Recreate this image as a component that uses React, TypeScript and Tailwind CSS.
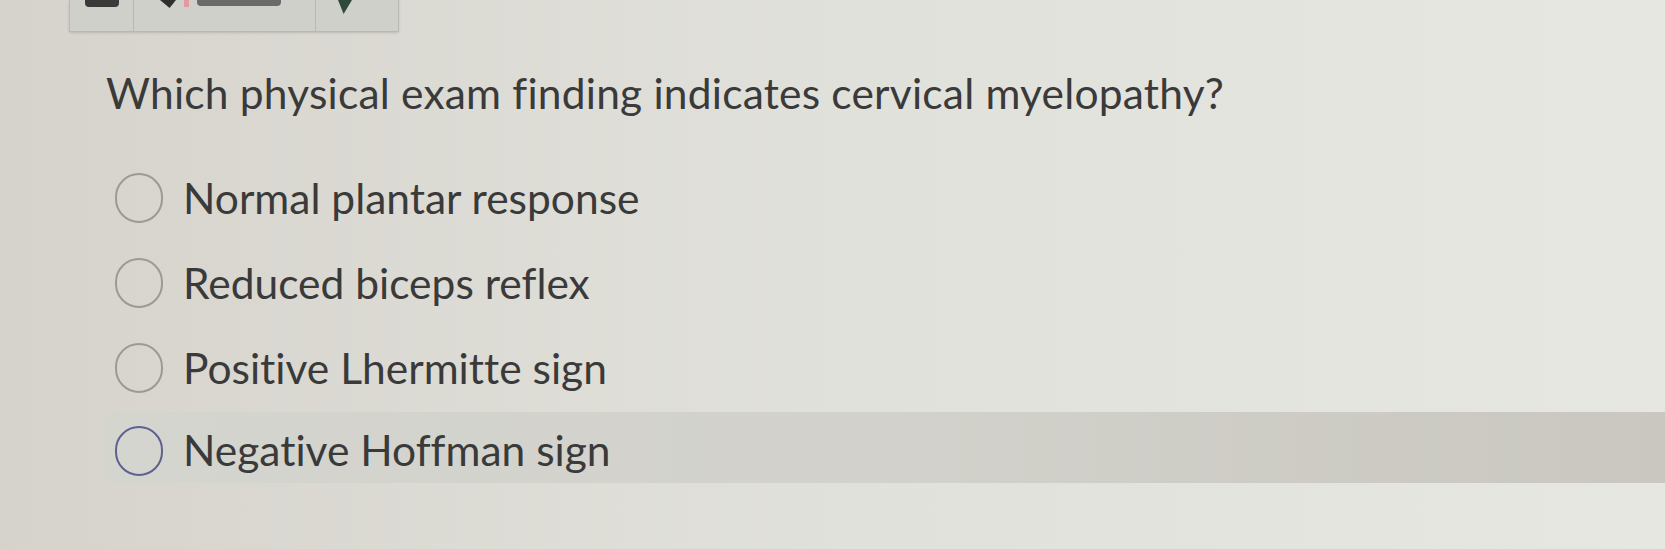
import { useState } from "react";

const options = [
  "Normal plantar response",
  "Reduced biceps reflex",
  "Positive Lhermitte sign",
  "Negative Hoffman sign",
];

export default function App() {
  const [hovered] = useState(3);
  return (
    <div
      className="w-[1665px] h-[549px] overflow-hidden bg-gradient-to-r from-[#d6d3cc] via-[#e1e1db] to-[#e7e7e2] text-[#3a3a3a] [font-variant-ligatures:none]"
      style={{ fontFamily: "Lato, 'Open Sans', sans-serif" }}
    >
      {/* toolbar cut off at top */}
      <div className="ml-[69px] flex h-[32px] w-[330px] border border-t-0 border-[#b9b9b4] bg-[#d0d0cb] shadow-sm">
        <div className="flex w-[64px] items-start justify-center border-r border-[#b9b9b4]">
          <div className="h-[7px] w-[34px] rounded-b-sm bg-[#3a3a3a]" />
        </div>
        <div className="flex w-[182px] items-start gap-2 border-r border-[#b9b9b4] pl-[26px]">
          <div className="h-[8px] w-[16px] bg-[#2f2f2f] [clip-path:polygon(0_0,100%_0,60%_100%)]" />
          <div className="h-[7px] w-[5px] bg-[#e19aa0]" />
          <div className="h-[6px] w-[84px] rounded-b-sm bg-[#6a6a6a]" />
        </div>
        <div className="flex flex-1 items-start pl-[22px]">
          <div className="h-[14px] w-[14px] bg-[#2f4a3a] [clip-path:polygon(0_0,100%_0,40%_100%)]" />
        </div>
      </div>

      <h1 className="ml-[106px] mt-[31px] text-[42.5px] font-normal leading-[60px] tracking-[0.2px]">
        Which physical exam finding indicates cervical myelopathy?
      </h1>

      <div className="mt-[40px] flex flex-col gap-[15px]">
        {options.map((o, i) => (
          <label
            key={o}
            className={`ml-[106px] flex items-center gap-[20px] pl-[9px] ${
              i === hovered
                ? "-mt-[6px] h-[71px] bg-gradient-to-r from-[#d5d5cf] via-[#d2d1cb] to-[#c9c7bf] pt-[6px]"
                : "h-[70px]"
            }`}
          >
            <span
              className={`h-[50px] w-[48px] shrink-0 rounded-full border-[2.5px] ${
                i === hovered ? "border-[#5d6190]" : "border-[#9a9a96]"
              }`}
            />
            <span className="text-[42.5px] leading-none">{o}</span>
          </label>
        ))}
      </div>
    </div>
  );
}
